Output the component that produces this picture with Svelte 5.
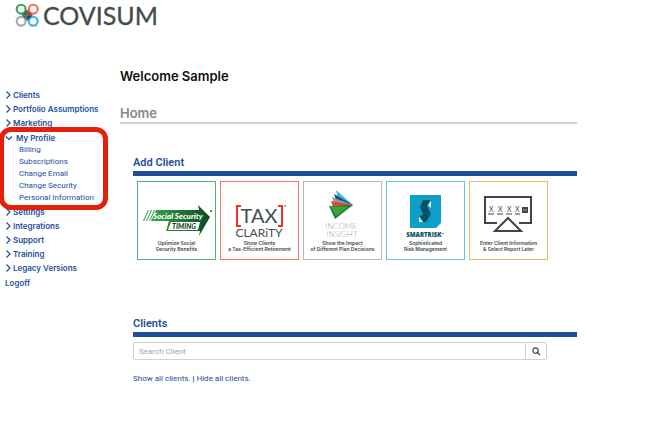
<script lang="ts">
	interface MenuItem {
		label: string;
		children?: string[];
	}

	const menu: MenuItem[] = [
		{ label: 'Clients' },
		{ label: 'Portfolio Assumptions' },
		{ label: 'Marketing' },
		{
			label: 'My Profile',
			children: [
				'Billing',
				'Subscriptions',
				'Change Email',
				'Change Security',
				'Personal Information'
			]
		},
		{ label: 'Settings' },
		{ label: 'Integrations' },
		{ label: 'Support' },
		{ label: 'Training' },
		{ label: 'Legacy Versions' }
	];

	const products = [
		{ id: 'timing', color: '#4fb274', caption: ['Optimize Social', 'Security Benefits'] },
		{ id: 'tax', color: '#f4776f', caption: ['Show Clients', 'a Tax-Efficient Retirement'] },
		{ id: 'income', color: '#b4bab9', caption: ['Show the Impact', 'of Different Plan Decisions'] },
		{ id: 'risk', color: '#62c8de', caption: ['Sophisticated', 'Risk Management'] },
		{ id: 'later', color: '#f3b858', caption: ['Enter Client Information', '& Select Report Later'] }
	];

	let open = $state('My Profile');
	let search = $state('');

	function toggle(label: string) {
		open = open === label ? '' : label;
	}
</script>

<header>
	<a href="#home" class="logo" aria-label="Covisum">
		<svg viewBox="0 -3 150 32">
			<g transform="translate(-1 -1) scale(1.1)">
				<path d="M6.5 11.5a5 5 0 1 1 5-5v5z" fill="#3fa45b" />
				<path d="M12.5 11.5v-5a5 5 0 1 1 5 5z" fill="#f0705c" />
				<path d="M11.5 12.5v5a5 5 0 1 1-5-5z" fill="#a9adaf" />
				<path d="M12.5 12.5h5a5 5 0 1 1-5 5z" fill="#48b4d8" />
				<path d="M12 12V7l-5 5z" fill="#17803d" />
				<path d="M12 12V7l5 5z" fill="#e5281b" />
				<path d="M12 12v5l-5-5z" fill="#5f6567" />
				<path d="M12 12v5l5-5z" fill="#0b4a6b" />
				<g fill="#fff">
					<circle cx="6.5" cy="6.5" r="3" />
					<circle cx="17.5" cy="6.5" r="3" />
					<circle cx="6.5" cy="17.5" r="3" />
					<circle cx="17.5" cy="17.5" r="3" />
				</g>
			</g>
			<text x="28" y="22" class="wordmark">COVISUM</text>
		</svg>
	</a>
</header>

<div class="page">
	<nav>
		<ul class="menu">
			{#each menu as item}
				<li class:marked={item.label === 'My Profile'}>
					<button
						type="button"
						class:expanded={open === item.label}
						aria-expanded={open === item.label}
						onclick={() => toggle(item.label)}
					>
						<svg viewBox="0 0 8 8">
							{#if open === item.label}
								<path d="M1 2.500l3 3 3-3" />
							{:else}
								<path d="M1.500 .5L5 4 1.500 7.500" />
							{/if}
						</svg>
						{item.label}
					</button>
					{#if item.children && open === item.label}
						<ul class="submenu">
							{#each item.children as child}
								<li><a href="#profile">{child}</a></li>
							{/each}
						</ul>
					{/if}
				</li>
			{/each}
		</ul>
		<a href="#logoff" class="logoff">Logoff</a>
	</nav>

	<main>
		<h1>Welcome Sample</h1>
		<h2>Home</h2>

		<section class="add">
			<h3>Add Client</h3>
			<div class="cards">
				{#each products as product}
					<a href="#add" class="card" style:border-color={product.color}>
						<svg viewBox="0 0 77 58">
							{#if product.id === 'timing'}
								<defs>
									<linearGradient id="arrow">
										<stop offset="0" stop-color="#39a547" />
										<stop offset="1" stop-color="#0a4a25" />
									</linearGradient>
								</defs>
								<path d="M5 39l5-11h1L6 39zM8 39l5-11h1L9 39zM11 39l5-11h1l-5 11z" fill="#2c9b45" />
								<path
									d="M18 28h43l-1-5 12 12-11 19 1-5H28l3-10H13z"
									fill="url(#arrow)"
								/>
								<path d="M33 40h29l-2 8H30z" fill="#fff" />
								<text x="15" y="37" class="social">Social Security</text>
								<text x="34" y="47" class="timing-word">TIMING</text>
								<circle cx="73" cy="29" r="1" fill="#14602f" />
							{:else if product.id === 'tax'}
								<path d="M20 24h-4v20h4M57 24h4v20h-4" fill="none" stroke="#ee3124" stroke-width="2" />
								<circle cx="64" cy="24" r="1" fill="#999" />
								<text x="38" y="41" class="tax-word">TAX</text>
								<text x="38" y="55" class="clarity">CLARiTY</text>
							{:else if product.id === 'income'}
								<path d="M32 8l17 15-15-6z" fill="#42b6dc" />
								<path d="M30 12l19 11-16-2z" fill="#0b5573" />
								<path d="M28 15l21 8-17 3z" fill="#8c979b" />
								<path d="M27 19l22 4-18 8z" fill="#ef4136" />
								<path d="M25 24l24-1-18 14z" fill="#17803d" />
								<path d="M26 24l18 1-12 9z" fill="#3f9f3f" />
								<text x="38" y="47" class="insight">INCOME<tspan class="tm" dy="-2">™</tspan></text>
								<text x="38" y="55" class="insight">INSIGHT</text>
							{:else if product.id === 'risk'}
								<path d="M23 13h31v28l-5 5H23z" fill="#0c9fc7" />
								<path d="M44 18v8l-3-3zM32 34v6h5z" fill="#d7f2f8" />
								<path d="M36 18h8l-4 6 4 8-5 8h-3l-4-6 4-1-3-8z" fill="#0a5068" />
								<text x="38" y="55" class="smart">SMARTRISK<tspan class="tm" dy="-2">™</tspan></text>
							{:else}
								<path
									d="M27 41H15V15h46v26H49"
									fill="none"
									stroke="#3d4747"
									stroke-width="2"
								/>
								<path d="M38 36l13 13H25z" fill="none" stroke="#3d4747" stroke-width="2" />
								<path d="M18 32h6M27 32h6M36 32h6M45 32h5" stroke="#3d4747" />
								<text x="19" y="30" class="code">X</text>
								<text x="28" y="30" class="code">X</text>
								<text x="37" y="30" class="code">X</text>
								<text x="45" y="30" class="code">X</text>
								<rect x="52" y="25" width="6" height="6" fill="#3d4747" />
								<path d="M53 28h4" stroke="#fff" stroke-width=".5" />
							{/if}
						</svg>
						{#each product.caption as line}
							<span>{line}</span>
						{/each}
					</a>
				{/each}
			</div>
		</section>

		<section class="clients">
			<h3>Clients</h3>
			<form class="search" onsubmit={(e) => e.preventDefault()}>
				<input type="text" placeholder="Search Client" aria-label="Search Client" bind:value={search} />
				<button type="submit" aria-label="Search">
					<svg viewBox="0 0 10 10">
						<circle cx="4" cy="4" r="3" />
						<path d="M6 6l3 3" />
					</svg>
				</button>
			</form>
			<p><a href="#show">Show all clients.</a> | <a href="#hide">Hide all clients.</a></p>
		</section>
	</main>
</div>

<style>
	:global(body) {
		margin: 0;
		background: #fff;
		color: #111;
		font-family: Roboto, 'Liberation Sans', sans-serif;
		font-size: 8px;
	}

	a {
		color: #1d4f9c;
		text-decoration: none;
	}

	h1,
	h2,
	h3,
	p,
	ul {
		margin: 0;
		padding: 0;
	}

	ul {
		list-style: none;
	}

	button {
		font: inherit;
		cursor: pointer;
	}

	header {
		padding: 0 15px;
	}

	.logo {
		display: block;
		width: 150px;
	}

	.logo svg {
		display: block;
		width: 150px;
		height: 32px;
	}

	.wordmark {
		font-family: Lato, sans-serif;
		font-size: 25px;
		fill: #414c4b;
		stroke: #414c4b;
		stroke-width: 0.3px;
	}

	.page {
		display: grid;
		grid-template-columns: 120px minmax(0, 1fr);
		padding-right: 86px;
	}

	nav {
		padding: 56px 0 0 5px;
		color: #1d4f9c;
	}

	.menu button {
		display: flex;
		align-items: center;
		padding: 0;
		border: 0;
		background: none;
		color: inherit;
		font-family: Inter, sans-serif;
		font-weight: 600;
		line-height: 14px;
		white-space: nowrap;
	}

	.menu button svg {
		width: 8px;
		height: 8px;
		fill: none;
		stroke: currentColor;
		stroke-width: 1.2px;
	}

	.menu button.expanded {
		gap: 3px;
	}

	.marked {
		position: relative;
		padding: 1px 0;
	}

	/* highlight ring drawn over the neighbouring entries */
	.marked::after {
		content: '';
		position: absolute;
		inset: -3px 12px -5px -6px;
		border: 5px solid #e51f0a;
		border-radius: 12px;
		pointer-events: none;
	}

	.submenu {
		margin-top: -1px;
	}

	.submenu a {
		display: block;
		padding-left: 14px;
		line-height: 12px;
	}

	.logoff {
		display: block;
		margin-top: 1px;
		font-family: Inter, sans-serif;
		font-weight: 600;
		line-height: 14px;
	}

	h1 {
		margin-top: 35px;
		font-family: Inter, sans-serif;
		font-size: 13px;
		font-weight: 600;
		line-height: 18px;
	}

	h2 {
		margin-top: 19px;
		border-bottom: 2px solid #d2d3d3;
		color: #858787;
		font-family: Inter, sans-serif;
		font-size: 13px;
		font-weight: 600;
		line-height: 18px;
	}

	section {
		margin-left: 13px;
	}

	h3 {
		border-bottom: 5px solid #1d4f9c;
		color: #1d4f9c;
		font-size: 11px;
		font-weight: 600;
		line-height: 16px;
	}

	.add {
		margin-top: 31px;
	}

	.cards {
		display: flex;
		gap: 4px;
		margin: 5px 0 0 4px;
	}

	.card {
		display: flex;
		flex-direction: column;
		width: 77px;
		height: 77px;
		border: 1px solid;
		color: #3d4747;
		font-family: Inter, sans-serif;
		font-size: 5px;
		font-weight: 600;
		line-height: 6px;
		text-align: center;
		white-space: nowrap;
	}

	.card svg {
		width: 77px;
		height: 58px;
	}

	.card text {
		fill: #454d4d;
		font-family: Lato, sans-serif;
		font-weight: 400;
	}

	.card .social {
		fill: #fff;
		font-size: 8px;
		font-style: italic;
		font-weight: 900;
	}

	.card .timing-word {
		fill: #173f25;
		font-size: 7px;
		font-style: italic;
		font-weight: 900;
	}

	.tax-word,
	.clarity,
	.insight,
	.smart {
		text-anchor: middle;
	}

	.tax-word {
		font-size: 20px;
	}

	.clarity {
		font-size: 12px;
	}

	.card .insight {
		fill: #a3aaaa;
		font-size: 8px;
		font-weight: 300;
	}

	.card .smart {
		fill: #0a5068;
		font-family: 'Open Sans', sans-serif;
		font-size: 6px;
		font-weight: 800;
	}

	.card .tm {
		font-size: 3px;
	}

	.code {
		font-size: 7px;
	}

	.clients {
		margin-top: 56px;
	}

	.search {
		display: flex;
		margin: 5px 30px 0 0;
	}

	.search input {
		flex: 1;
		min-width: 0;
		height: 18px;
		box-sizing: border-box;
		padding: 0 5px;
		border: 1px solid #cfd2d4;
		border-radius: 2px 0 0 2px;
		font: inherit;
	}

	.search input::placeholder {
		color: #a2a5a7;
	}

	.search button {
		display: flex;
		align-items: center;
		justify-content: center;
		width: 22px;
		margin-left: -1px;
		padding: 0;
		border: 1px solid #cfd2d4;
		border-radius: 0 2px 2px 0;
		background: #fff;
	}

	.search button svg {
		width: 9px;
		height: 9px;
		fill: none;
		stroke: #333;
		stroke-width: 1.2px;
	}

	.clients p {
		margin-top: 13px;
		line-height: 12px;
	}
</style>
